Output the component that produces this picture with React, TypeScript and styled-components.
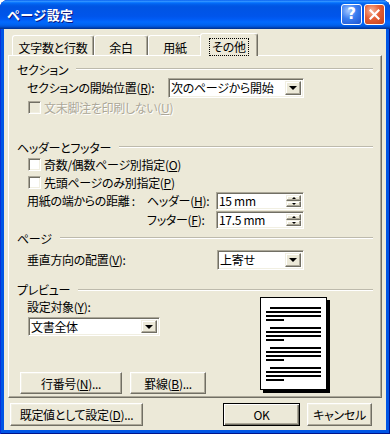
import React from "react";
import styled, { createGlobalStyle, css } from "styled-components";

const Global = createGlobalStyle`
  html, body { margin: 0; padding: 0; background: #ffffff; }
  * { box-sizing: border-box; }
`;

const Window = styled.div`
  width: 390px;
  height: 434px;
  display: flex;
  flex-direction: column;
  background: #0055e5;
  border-radius: 8px 8px 0 0;
  overflow: hidden;
  box-shadow: inset 1px 0 #0831d9, inset -1px 0 #00138c, inset 0 -1px #00138c;
  font-family: "Noto Sans CJK JP", "Noto Sans", sans-serif;
  font-size: 12px;
  letter-spacing: -0.3px;
  color: #000;
  font-feature-settings: "palt";
`;

const TitleBar = styled.div`
  height: 29px;
  flex: none;
  display: flex;
  align-items: center;
  padding: 0 5px 1px 7px;
  background: linear-gradient(
    180deg,
    #0058ee 0%,
    #3593ff 4%,
    #288eff 6%,
    #127dff 8%,
    #036ffc 10%,
    #0262ee 14%,
    #0057e5 20%,
    #0054e3 24%,
    #0055eb 56%,
    #005bf5 66%,
    #026afe 76%,
    #0062ef 86%,
    #0052d6 92%,
    #0040ab 96%,
    #003092 100%
  );
`;

const Title = styled.span`
  color: #fff;
  font-weight: 700;
  font-size: 13px;
  letter-spacing: 0.3px;
  font-feature-settings: normal;
  text-shadow: 1px 1px 0 #0a1883;
`;

const CaptionButtons = styled.div`
  margin-left: auto;
  display: flex;
  gap: 2px;
`;

const CaptionButton = styled.div<{ $variant: "help" | "close" }>`
  width: 21px;
  height: 21px;
  border: 1px solid #fff;
  border-radius: 3px;
  display: flex;
  align-items: center;
  justify-content: center;
  color: #fff;
  font-family: "DejaVu Sans", sans-serif;
  font-weight: 700;
  font-size: 15px;
  letter-spacing: 0;
  line-height: 1;
  background: ${(p) =>
    p.$variant === "close"
      ? "radial-gradient(circle at 35% 30%, #f7b59a 0%, #e45e35 45%, #c3411a 100%)"
      : "radial-gradient(circle at 35% 30%, #a6c8ff 0%, #3a7df0 45%, #1c52d0 100%)"};
`;

const Client = styled.div`
  flex: 1;
  margin: 0 4px 4px 4px;
  background: #ece9d8;
  display: flex;
  flex-direction: column;
`;

const TabStrip = styled.div`
  height: 26px;
  flex: none;
  display: flex;
  align-items: flex-end;
  padding-left: 8px;
`;

const Tab = styled.div<{ $w: number; $active?: boolean }>`
  position: relative;
  z-index: ${(p) => (p.$active ? 2 : 1)};
  width: ${(p) => p.$w}px;
  height: ${(p) => (p.$active ? 23 : 20)}px;
  margin-left: ${(p) => (p.$active ? -2 : 0)}px;
  margin-bottom: ${(p) => (p.$active ? -1 : 0)}px;
  background: #ece9d8;
  border-top: 1px solid #fff;
  border-left: 1px solid #fff;
  border-right: 1px solid #716f64;
  box-shadow: inset -1px 0 #aca899;
  border-radius: 3px 3px 0 0;
  display: flex;
  align-items: center;
  justify-content: center;
  padding-top: 3px;
  white-space: nowrap;
`;

const FocusLabel = styled.span`
  height: 16px;
  padding: 0 2px;
  display: flex;
  align-items: center;
  outline: 1px dotted #000;
`;

const Panel = styled.div`
  margin: 0 4px;
  height: 343px;
  flex: none;
  border: 1px solid;
  border-color: #fff #716f64 #716f64 #fff;
  box-shadow: inset -1px -1px #aca899;
  padding: 5px 8px 0 8px;
  display: flex;
  flex-direction: column;
`;

const GroupHeader = styled.div<{ $h?: number; $mt?: number }>`
  display: flex;
  align-items: center;
  gap: 8px;
  height: ${(p) => p.$h ?? 16}px;
  margin-top: ${(p) => p.$mt ?? 0}px;
  white-space: nowrap;
  &::after {
    content: "";
    flex: 1;
    height: 0;
    border-top: 1px solid #bdbaac;
    border-bottom: 1px solid #fff;
  }
`;

const Row = styled.div<{ $h: number; $mt?: number }>`
  display: flex;
  align-items: center;
  height: ${(p) => p.$h}px;
  margin-top: ${(p) => p.$mt ?? 0}px;
  padding-left: 10px;
  white-space: nowrap;
`;

const Label = styled.span<{ $w?: number; $disabled?: boolean }>`
  flex: none;
  ${(p) => p.$w !== undefined && css`width: ${p.$w}px;`}
  white-space: nowrap;
  ${(p) =>
    p.$disabled &&
    css`
      color: #aca899;
      text-shadow: 1px 1px 0 #fff;
    `}
`;

const CheckBox = styled.span<{ $disabled?: boolean }>`
  width: 13px;
  height: 13px;
  flex: none;
  margin: 0 3px 0 1px;
  background: ${(p) => (p.$disabled ? "#ece9d8" : "#fff")};
  border: 1px solid;
  border-color: #aca899 #fff #fff #aca899;
  box-shadow: inset 1px 1px #716f64, inset -1px -1px #f1efe2;
`;

const Field = styled.div<{ $w: number; $h?: number; $ml?: number; $mt?: number }>`
  width: ${(p) => p.$w}px;
  height: ${(p) => p.$h ?? 20}px;
  margin-left: ${(p) => p.$ml ?? 0}px;
  margin-top: ${(p) => p.$mt ?? 0}px;
  flex: none;
  display: flex;
  align-items: center;
  background: #fff;
  border: 1px solid;
  border-color: #aca899 #fff #fff #aca899;
  box-shadow: inset 1px 1px #716f64, inset -1px -1px #f1efe2;
  padding: 2px;
`;

const FieldText = styled.span`
  flex: 1;
  min-width: 0;
  white-space: nowrap;
  line-height: 16px;
`;

const raised = css`
  background: #ece9d8;
  border: 1px solid;
  border-color: #f1efe2 #716f64 #716f64 #f1efe2;
  box-shadow: inset -1px -1px #aca899, inset 1px 1px #fff;
`;

const DropButton = styled.span`
  ${raised}
  width: 16px;
  height: 100%;
  flex: none;
  display: flex;
  align-items: center;
  justify-content: center;
  &::before {
    content: "";
    border-left: 4px solid transparent;
    border-right: 4px solid transparent;
    border-top: 4px solid #000;
    margin-top: 1px;
  }
`;

const SpinButtons = styled.span`
  width: 15px;
  height: 100%;
  flex: none;
  display: flex;
  flex-direction: column;
`;

const SpinBtn = styled.span<{ $up?: boolean }>`
  ${raised}
  flex: 1;
  display: flex;
  align-items: center;
  justify-content: center;
  &::before {
    content: "";
    border-left: 2px solid transparent;
    border-right: 2px solid transparent;
    ${(p) =>
      p.$up
        ? css`border-bottom: 2px solid #000;`
        : css`border-top: 2px solid #000;`}
  }
`;

const PreviewBody = styled.div`
  display: flex;
  padding-left: 3px;
`;

const PreviewLeft = styled.div`
  width: 240px;
  flex: none;
  display: flex;
  flex-direction: column;
`;

const SubLabel = styled.div`
  height: 16px;
  margin-top: 1px;
  padding-left: 7px;
  display: flex;
  align-items: center;
`;

const ButtonRow = styled.div<{ $mt?: number }>`
  display: flex;
  gap: 8px;
  margin-top: ${(p) => p.$mt ?? 0}px;
`;

const Button = styled.div<{ $w: number; $h?: number; $default?: boolean }>`
  width: ${(p) => p.$w}px;
  height: ${(p) => p.$h ?? 23}px;
  flex: none;
  display: flex;
  align-items: center;
  justify-content: center;
  white-space: nowrap;
  background: #ece9d8;
  border: 1px solid;
  border-color: #fff #716f64 #716f64 #fff;
  box-shadow: inset -1px -1px #aca899, inset 1px 1px #f1efe2;
  ${(p) =>
    p.$default &&
    css`
      border-color: #000;
      box-shadow: inset 1px 1px #fff, inset -1px -1px #716f64, inset -2px -2px #aca899;
    `}
`;

const PageThumb = styled.div`
  width: 67px;
  height: 93px;
  flex: none;
  background: #fff;
  border: 1px solid #000;
  box-shadow: 3px 3px 0 #000;
  display: flex;
`;

const Footer = styled.div`
  height: 32px;
  flex: none;
  display: flex;
  align-items: flex-start;
  padding: 5px 14px 0 6px;
`;

const Spacer = styled.div<{ $w?: number }>`
  ${(p) => (p.$w !== undefined ? css`width: ${p.$w}px; flex: none;` : css`flex: 1;`)}
`;

const Gap = styled.div<{ $w: number }>`
  width: ${(p) => p.$w}px;
  flex: none;
`;

const Combo: React.FC<{ w: number; h?: number; ml?: number; mt?: number; children: React.ReactNode }> = ({
  w,
  h,
  ml,
  mt,
  children,
}) => (
  <Field $w={w} $h={h} $ml={ml} $mt={mt}>
    <FieldText>{children}</FieldText>
    <DropButton />
  </Field>
);

const Spin: React.FC<{ children: React.ReactNode }> = ({ children }) => (
  <Field $w={88} $h={18}>
    <FieldText>{children}</FieldText>
    <SpinButtons>
      <SpinBtn $up />
      <SpinBtn />
    </SpinButtons>
  </Field>
);

const PageLines: React.FC = () => {
  const groups = [0, 20, 40, 60];
  return (
    <svg width="65" height="91" viewBox="0 0 65 91">
      {groups.map((g) => (
        <g key={g} fill="#000">
          <rect x="9" y={9 + g} width="51" height="2" />
          <rect x="5" y={13 + g} width="55" height="2" />
          <rect x="5" y={17 + g} width="55" height="2" />
          <rect x="5" y={21 + g} width="18" height="2" />
        </g>
      ))}
    </svg>
  );
};

export default function App() {
  return (
    <>
      <Global />
      <Window>
        <TitleBar>
          <Title>ページ設定</Title>
          <CaptionButtons>
            <CaptionButton $variant="help">?</CaptionButton>
            <CaptionButton $variant="close">
              <svg width="11" height="11" viewBox="0 0 11 11">
                <path d="M1.5 1.5 L9.5 9.5 M9.5 1.5 L1.5 9.5" stroke="#fff" strokeWidth="2.2" strokeLinecap="square" />
              </svg>
            </CaptionButton>
          </CaptionButtons>
        </TitleBar>
        <Client>
          <TabStrip>
            <Tab $w={82}>文字数と行数</Tab>
            <Tab $w={54}>余白</Tab>
            <Tab $w={54}>用紙</Tab>
            <Tab $w={58} $active>
              <FocusLabel>その他</FocusLabel>
            </Tab>
          </TabStrip>
          <Panel>
            <GroupHeader>セクション</GroupHeader>
            <Row $h={21}>
              <Label $w={141}>
                セクションの開始位置(<u>R</u>):
              </Label>
              <Combo w={136}>次のページから開始</Combo>
            </Row>
            <Row $h={18}>
              <CheckBox $disabled />
              <Label $disabled>
                文末脚注を印刷しない(<u>U</u>)
              </Label>
            </Row>

            <GroupHeader $mt={23}>ヘッダーとフッター</GroupHeader>
            <Row $h={18}>
              <CheckBox />
              <Label>
                奇数/偶数ページ別指定(<u>O</u>)
              </Label>
            </Row>
            <Row $h={18}>
              <CheckBox />
              <Label>
                先頭ページのみ別指定(<u>P</u>)
              </Label>
            </Row>
            <Row $h={19}>
              <Label $w={120}>用紙の端からの距離 :</Label>
              <Label $w={69}>
                ヘッダー(<u>H</u>):
              </Label>
              <Spin>15 mm</Spin>
            </Row>
            <Row $h={19}>
              <Spacer $w={120} />
              <Label $w={69}>
                フッター(<u>F</u>):
              </Label>
              <Spin>17.5 mm</Spin>
            </Row>

            <GroupHeader $mt={1}>ページ</GroupHeader>
            <Row $h={21} $mt={3}>
              <Label $w={190}>
                垂直方向の配置(<u>V</u>):
              </Label>
              <Combo w={87}>上寄せ</Combo>
            </Row>

            <GroupHeader $mt={12} $h={15}>
              プレビュー
            </GroupHeader>
            <PreviewBody>
              <PreviewLeft>
                <SubLabel>
                  設定対象(<u>Y</u>):
                </SubLabel>
                <Combo w={132} h={19} ml={8} mt={3}>
                  文書全体
                </Combo>
                <ButtonRow $mt={36}>
                  <Button $w={102} $h={22}>
                    行番号(<u>N</u>)...
                  </Button>
                  <Button $w={76} $h={22}>
                    罫線(<u>B</u>)...
                  </Button>
                </ButtonRow>
              </PreviewLeft>
              <PageThumb>
                <PageLines />
              </PageThumb>
            </PreviewBody>
          </Panel>
          <Footer>
            <Button $w={133}>
              既定値として設定(<u>D</u>)...
            </Button>
            <Spacer />
            <Button $w={77} $default>
              OK
            </Button>
            <Gap $w={7} />
            <Button $w={65}>キャンセル</Button>
          </Footer>
        </Client>
      </Window>
    </>
  );
}
